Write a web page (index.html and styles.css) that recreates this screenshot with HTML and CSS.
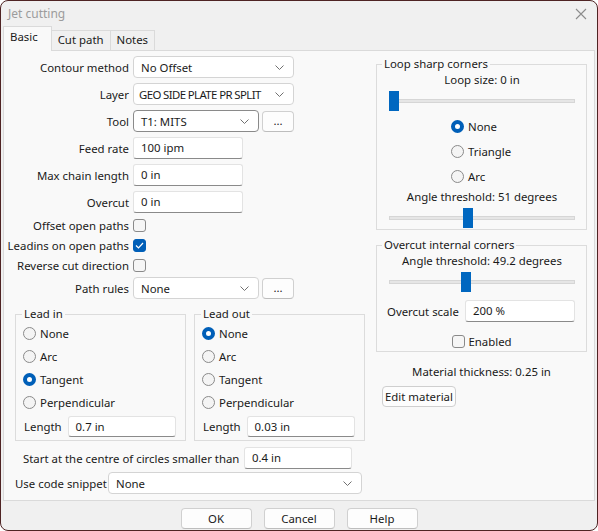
FILE: index.html
```html
<!DOCTYPE html>
<html>

<head>
    <meta charset="utf-8" />
    <title>Jet cutting</title>
    <link rel="stylesheet" href="styles.css">
</head>

<body>
    <div class="window">
        <div class="titlebar">
            <span class="title">Jet cutting</span>
            <svg class="close" width="12" height="12" viewBox="0 0 12 12">
                <path d="M1 1 L11 11 M11 1 L1 11" stroke="#8c8c8c" stroke-width="1.1" fill="none" />
            </svg>
        </div>
        <div class="tabs">
            <div class="tab active">Basic</div>
            <div class="tab">Cut path</div>
            <div class="tab">Notes</div>
        </div>
        <div class="panel">
            <div class="left">
                <div class="row">
                    <span class="lbl">Contour method</span>
                    <div class="select w161"><span>No Offset</span><svg class="chev" width="9" height="5" viewBox="0 0 9 5"><path d="M0.5 0.5 L4.5 4.5 L8.5 0.5" stroke="#707070" fill="none" /></svg></div>
                </div>
                <div class="row">
                    <span class="lbl">Layer</span>
                    <div class="select w161"><span class="tight">GEO SIDE PLATE PR SPLIT</span><svg class="chev" width="9" height="5" viewBox="0 0 9 5"><path d="M0.5 0.5 L4.5 4.5 L8.5 0.5" stroke="#707070" fill="none" /></svg></div>
                </div>
                <div class="row">
                    <span class="lbl">Tool</span>
                    <div class="select w126 focus"><span>T1: MITS</span><svg class="chev" width="9" height="5" viewBox="0 0 9 5"><path d="M0.5 0.5 L4.5 4.5 L8.5 0.5" stroke="#707070" fill="none" /></svg></div>
                    <div class="btn dots">...</div>
                </div>
                <div class="row">
                    <span class="lbl">Feed rate</span>
                    <div class="input w110">100 ipm</div>
                </div>
                <div class="row">
                    <span class="lbl">Max chain length</span>
                    <div class="input w110">0 in</div>
                </div>
                <div class="row">
                    <span class="lbl">Overcut</span>
                    <div class="input w110">0 in</div>
                </div>
                <div class="row check-row first">
                    <span class="lbl">Offset open paths</span>
                    <span class="box"></span>
                </div>
                <div class="row check-row">
                    <span class="lbl">Leadins on open paths</span>
                    <span class="box on"><svg width="9" height="7" viewBox="0 0 9 7"><path d="M1 3.5 L3.5 6 L8 1" stroke="#fff" stroke-width="1.2" fill="none" /></svg></span>
                </div>
                <div class="row check-row">
                    <span class="lbl">Reverse cut direction</span>
                    <span class="box"></span>
                </div>
                <div class="row path-row">
                    <span class="lbl">Path rules</span>
                    <div class="select w126"><span>None</span><svg class="chev" width="9" height="5" viewBox="0 0 9 5"><path d="M0.5 0.5 L4.5 4.5 L8.5 0.5" stroke="#707070" fill="none" /></svg></div>
                    <div class="btn dots">...</div>
                </div>

                <div class="leads">
                    <fieldset class="group lead">
                        <legend>Lead in</legend>
                        <div class="radio-row"><span class="radio"></span>None</div>
                        <div class="radio-row"><span class="radio"></span>Arc</div>
                        <div class="radio-row"><span class="radio on"></span>Tangent</div>
                        <div class="radio-row"><span class="radio"></span>Perpendicular</div>
                        <div class="len-row"><span>Length</span><div class="input w108">0.7 in</div></div>
                    </fieldset>
                    <fieldset class="group lead">
                        <legend>Lead out</legend>
                        <div class="radio-row"><span class="radio on"></span>None</div>
                        <div class="radio-row"><span class="radio"></span>Arc</div>
                        <div class="radio-row"><span class="radio"></span>Tangent</div>
                        <div class="radio-row"><span class="radio"></span>Perpendicular</div>
                        <div class="len-row"><span>Length</span><div class="input w108">0.03 in</div></div>
                    </fieldset>
                </div>

                <div class="centre-row">
                    <span class="centre-lbl">Start at the centre of circles smaller than</span>
                    <div class="input w108">0.4 in</div>
                </div>
                <div class="snippet-row">
                    <span class="snippet-lbl">Use code snippet</span>
                    <div class="select w254"><span>None</span><svg class="chev" width="9" height="5" viewBox="0 0 9 5"><path d="M0.5 0.5 L4.5 4.5 L8.5 0.5" stroke="#707070" fill="none" /></svg></div>
                </div>
            </div>

            <div class="right">
                <fieldset class="group loop">
                    <legend>Loop sharp corners</legend>
                    <div class="caption">Loop size: 0 in</div>
                    <div class="slider"><div class="track"></div><div class="thumb" style="left: 0px"></div></div>
                    <div class="radios-center">
                        <div class="radio-row tall"><span class="radio on"></span>None</div>
                        <div class="radio-row tall"><span class="radio"></span>Triangle</div>
                        <div class="radio-row tall"><span class="radio"></span>Arc</div>
                    </div>
                    <div class="caption">Angle threshold: 51 degrees</div>
                    <div class="slider"><div class="track"></div><div class="thumb" style="left: 74px"></div></div>
                </fieldset>

                <fieldset class="group overcut">
                    <legend>Overcut internal corners</legend>
                    <div class="caption">Angle threshold: 49.2 degrees</div>
                    <div class="slider"><div class="track"></div><div class="thumb" style="left: 72px"></div></div>
                    <div class="scale-row"><span>Overcut scale</span><div class="input w110">200 %</div></div>
                    <div class="enabled-row"><span class="box"></span>Enabled</div>
                </fieldset>

                <div class="material">Material thickness: 0.25 in</div>
                <div class="btn edit">Edit material</div>
            </div>
        </div>
        <div class="buttons">
            <div class="btn main">OK</div>
            <div class="btn main">Cancel</div>
            <div class="btn main">Help</div>
        </div>
    </div>
</body>

</html>
```

FILE: styles.css
```css
* {
    font-family: 'Noto Sans', 'Open Sans', sans-serif;
    box-sizing: border-box;
    padding: 0;
    margin: 0;
}

body {
    width: 598px;
    height: 531px;
    background: #fff;
    font-size: 11.4px;
    color: #1a1a1a;
}

.window {
    width: 598px;
    height: 531px;
    background: #f0f0f0;
    border: 1px solid #4f2424;
    border-radius: 8px;
    overflow: hidden;
    display: flex;
    flex-direction: column;
}

.titlebar {
    height: 25px;
    display: flex;
    align-items: center;
    justify-content: space-between;
    padding: 0 10px 0 7px;
}

.title {
    color: #9c9c9c;
    font-size: 12px;
}

.tabs {
    height: 24px;
    display: flex;
    align-items: flex-end;
    padding-left: 2px;
    position: relative;
    z-index: 1;
}

.tab {
    height: 20px;
    line-height: 18px;
    padding: 0 6px;
    border: 1px solid #dadada;
    border-bottom: none;
    border-left: none;
    background: #f0f0f0;
}

.tab.active {
    height: 25px;
    line-height: 20px;
    padding: 0 13px 0 6px;
    background: #f9f9f9;
    border-left: 1px solid #dadada;
    margin-bottom: -1px;
}

.panel {
    height: 451px;
    margin: 0 2px;
    background: #f9f9f9;
    border: 1px solid #dadada;
    display: flex;
    padding-top: 5px;
}

.left {
    width: 366px;
}

.row {
    display: flex;
    align-items: center;
    height: 22px;
    margin-bottom: 5px;
}

.lbl {
    width: 125px;
    text-align: right;
    margin-right: 4px;
    white-space: nowrap;
}

.check-row {
    height: 20px;
    margin-bottom: 0;
}

.check-row.first {
    margin-top: -3px;
}

.path-row {
    margin-top: 2px;
}

.select {
    height: 22px;
    background: #fff;
    border: 1px solid #d4d4d4;
    border-radius: 4px;
    display: flex;
    align-items: center;
    justify-content: space-between;
    padding: 0 9px 0 7px;
    white-space: nowrap;
    overflow: hidden;
}

.select .tight {
    letter-spacing: -0.6px;
    margin-left: -2px;
}

.select.focus {
    border-color: #8a8a8a;
}

.chev {
    flex: none;
}

.input {
    height: 22px;
    background: #fff;
    border: 1px solid #e3e3e3;
    border-bottom: 1px solid #8a8a8a;
    border-radius: 3px;
    padding: 0 7px;
    line-height: 20px;
    white-space: nowrap;
}

.w161 { width: 161px; }
.w126 { width: 126px; }
.w110 { width: 110px; }
.w108 { width: 108px; }
.w254 { width: 254px; }

.btn {
    height: 21px;
    background: #fdfdfd;
    border: 1px solid #d0d0d0;
    border-bottom-color: #bdbdbd;
    border-radius: 4px;
    text-align: center;
    line-height: 19px;
}

.dots {
    width: 32px;
    margin-left: 3px;
    line-height: 17px;
}

.box {
    width: 13px;
    height: 13px;
    border: 1px solid #8a8a8a;
    border-radius: 3px;
    background: #f6f6f6;
    display: inline-flex;
    align-items: center;
    justify-content: center;
    flex: none;
}

.box.on {
    background: #005fb8;
    border-color: #005fb8;
}

.group {
    border: 1px solid #dcdcdc;
    border-radius: 0;
    min-width: 0;
}

.group legend {
    padding: 0 2px;
    line-height: 16px;
}

.leads {
    display: flex;
    gap: 8px;
    margin: 7px 0 0 11px;
}

.lead {
    width: 171px;
    padding: 0 9px 3px 7px;
}

.lead legend {
    margin-left: -1px;
}

.radio-row {
    height: 23px;
    display: flex;
    align-items: center;
}

.radio {
    width: 13px;
    height: 13px;
    border-radius: 50%;
    border: 1px solid #8a8a8a;
    background: #f4f4f4;
    margin-right: 4px;
    flex: none;
}

.radio.on {
    border: 4px solid #005fb8;
    background: #fff;
}

.len-row {
    display: flex;
    align-items: center;
    gap: 6px;
    margin-top: 2px;
    margin-left: 1px;
}

.len-row .input {
    height: 21px;
}

.centre-row {
    display: flex;
    align-items: center;
    margin: 6px 0 0 19px;
    height: 22px;
    white-space: nowrap;
}

.centre-lbl {
    width: 221px;
}

.snippet-row {
    display: flex;
    align-items: center;
    margin: 3px 0 0 11px;
    white-space: nowrap;
}

.snippet-lbl {
    width: 93px;
}

.right {
    width: 211px;
    margin-left: 6px;
}

.loop {
    padding: 0 11px 1px 12px;
}

.loop legend,
.overcut legend {
    margin-left: -7px;
}

.caption {
    text-align: center;
    line-height: 16px;
}

.slider {
    position: relative;
    height: 20px;
    margin-top: 3px;
}

.track {
    position: absolute;
    left: 0;
    right: 0;
    top: 8px;
    height: 4px;
    background: #e6e6e6;
    border: 1px solid #d6d6d6;
}

.thumb {
    position: absolute;
    top: 0;
    width: 10px;
    height: 20px;
    background: #0067c0;
}

.radios-center {
    margin: 3px 0 0 62px;
}

.radio-row.tall {
    height: 25px;
}

.overcut {
    margin-top: 7px;
    padding: 0 11px 0 12px;
}

.scale-row {
    display: flex;
    align-items: center;
    justify-content: space-between;
    margin: 8px 0 0 -2px;
}

.enabled-row {
    display: flex;
    align-items: center;
    justify-content: center;
    gap: 3px;
    height: 20px;
    margin-top: 9px;
}

.material {
    text-align: center;
    margin-top: 12px;
    line-height: 16px;
}

.btn.edit {
    display: inline-block;
    margin: 6px 0 0 6px;
    padding: 0 2px;
    border-color: #cfcfcf;
}

.buttons {
    display: flex;
    justify-content: center;
    gap: 12px;
    padding-top: 7px;
}

.btn.main {
    width: 71px;
}
```
